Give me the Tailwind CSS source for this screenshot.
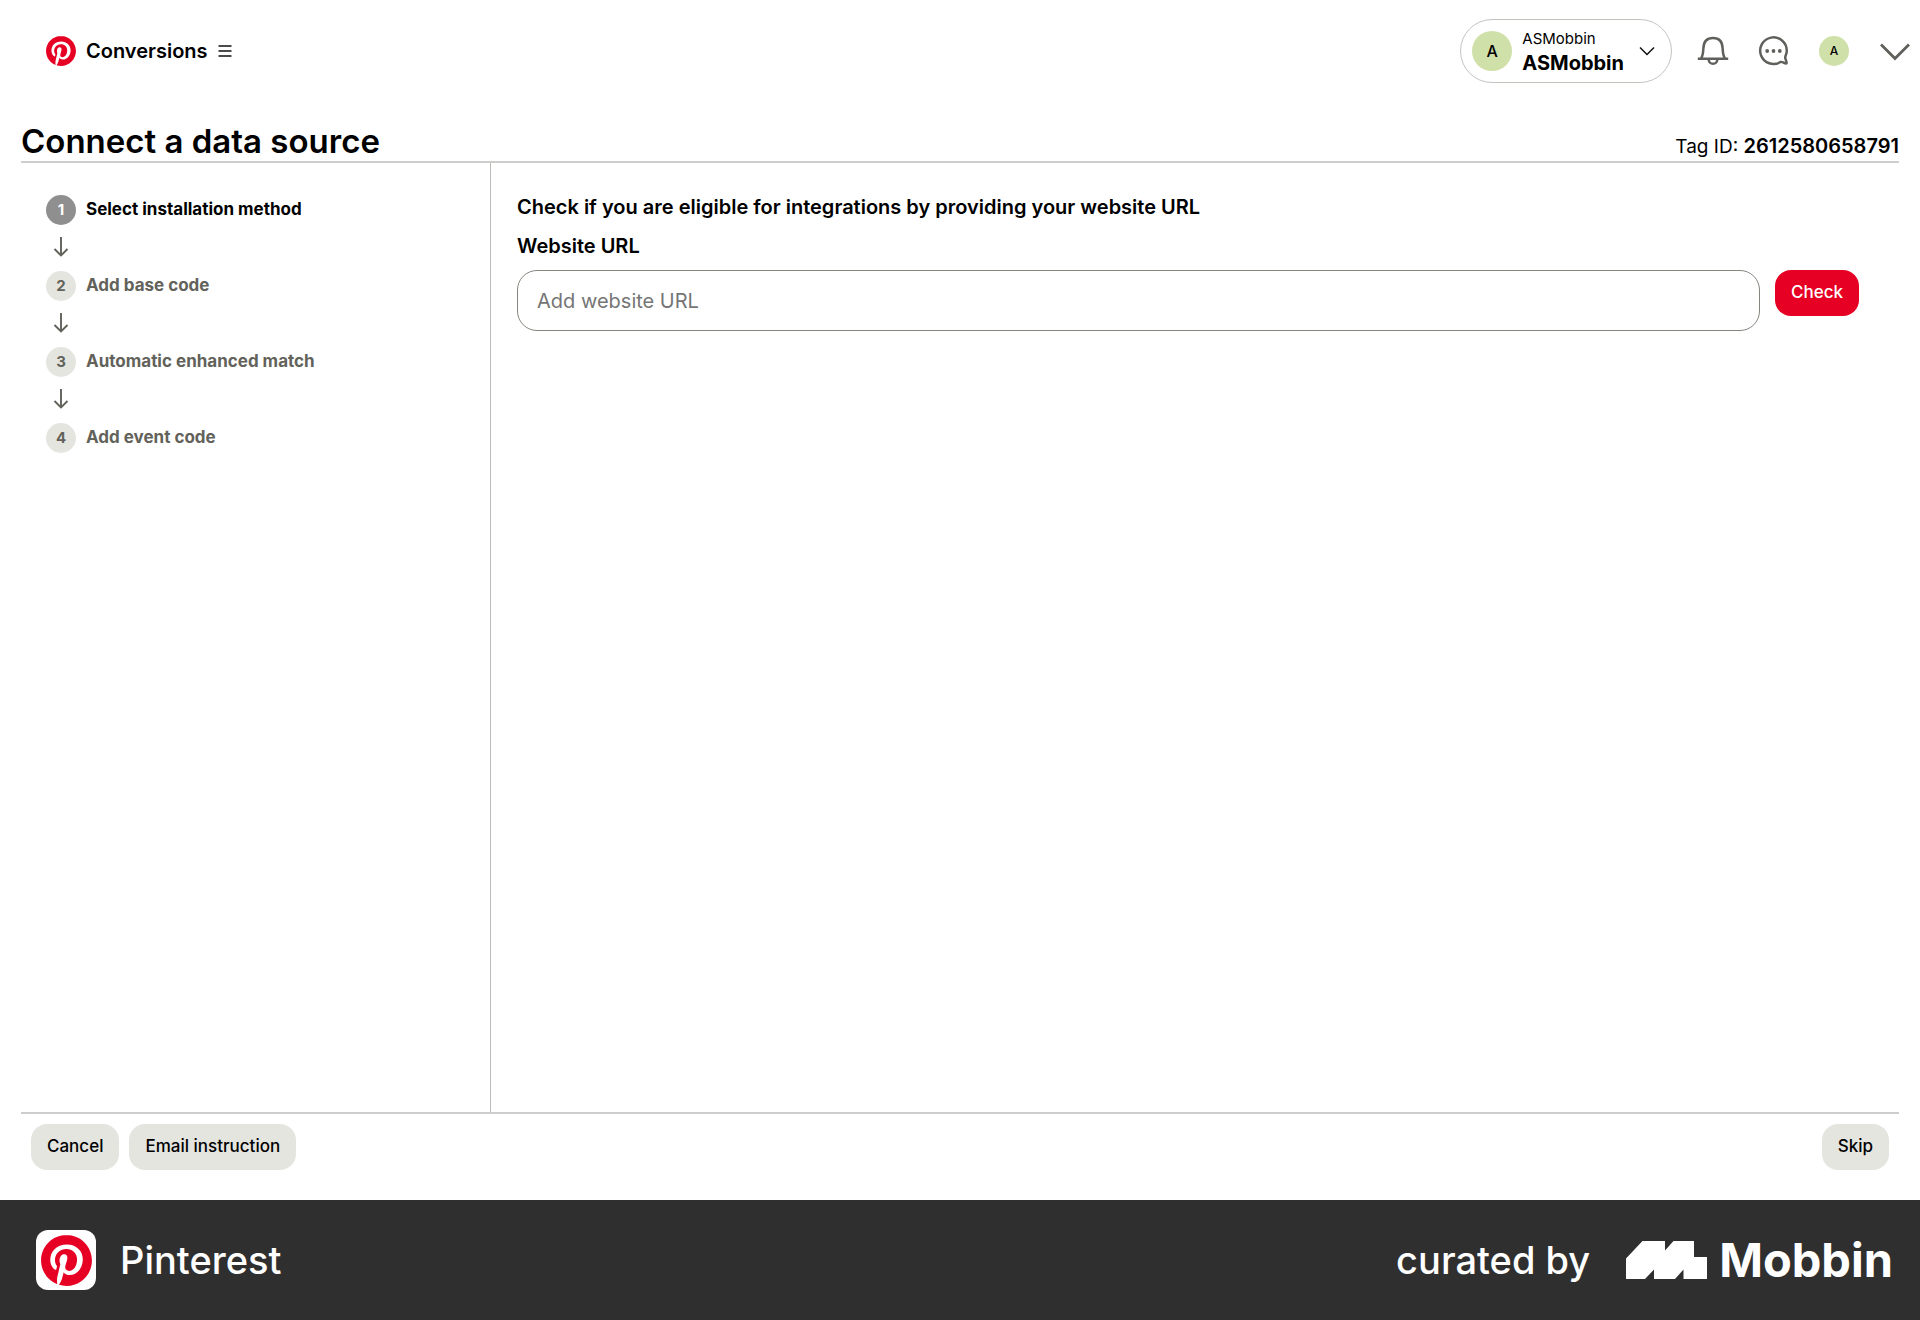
<!DOCTYPE html>
<html lang="en">
<head>
<meta charset="utf-8">
<meta name="viewport" content="width=device-width, initial-scale=1">
<title>Connect a data source</title>
<script src="https://cdn.jsdelivr.net/npm/@tailwindcss/browser@4"></script>
</head>
<body class="flex min-h-screen flex-col bg-white font-['Inter',sans-serif] text-black">
<svg class="hidden" aria-hidden="true">
  <symbol id="pin" viewBox="0 0 24 24"><circle cx="12" cy="12" r="11.5" fill="#fff"/><path fill="#e60023" d="M12.017 0C5.396 0 .029 5.367.029 11.987c0 5.079 3.158 9.417 7.618 11.162-.105-.949-.199-2.403.041-3.439.219-.937 1.406-5.957 1.406-5.957s-.359-.72-.359-1.781c0-1.663.967-2.911 2.168-2.911 1.024 0 1.518.769 1.518 1.688 0 1.029-.653 2.567-.992 3.992-.285 1.193.6 2.165 1.775 2.165 2.128 0 3.768-2.245 3.768-5.487 0-2.861-2.063-4.869-5.008-4.869-3.41 0-5.409 2.562-5.409 5.199 0 1.033.394 2.143.889 2.741.099.12.112.225.085.345-.09.375-.293 1.199-.334 1.363-.053.225-.172.271-.401.165-1.495-.69-2.433-2.878-2.433-4.646 0-3.776 2.748-7.252 7.92-7.252 4.158 0 7.392 2.967 7.392 6.923 0 4.135-2.607 7.462-6.233 7.462-1.214 0-2.354-.629-2.758-1.379l-.749 2.848c-.269 1.045-1.004 2.352-1.498 3.146 1.123.345 2.306.535 3.55.535 6.607 0 11.985-5.365 11.985-11.987C23.97 5.39 18.592.026 11.985.026L12.017 0z"/></symbol>
  <symbol id="arrow" viewBox="0 0 16 20"><path d="M8 0V18.5M1.5 12 8 18.500 14.500 12" fill="none" stroke="#62625b" stroke-width="1.9"/></symbol>
</svg>

<header class="flex h-[102px] items-center justify-between pr-2 pl-[46px]">
  <div class="flex items-center">
    <a href="#" aria-label="Pinterest home"><svg class="size-[30px]"><use href="#pin"/></svg></a>
    <span class="ml-[10px] text-xl font-semibold">Conversions</span>
    <button type="button" aria-label="Menu" class="ml-[10px]">
      <svg class="h-4 w-[14px]" viewBox="0 0 14 16"><path d="M0.500 3H13.500M0.500 8H13.500M0.500 13H13.500" stroke="#111" stroke-width="1.5"/></svg>
    </button>
  </div>
  <div class="flex items-center gap-[25px]">
    <button type="button" class="flex h-[64px] items-center rounded-full border border-[#c4c4bf] pr-4 pl-[11px] text-left">
      <span class="flex size-10 items-center justify-center rounded-full bg-[#cfe0a8] text-base font-medium">A</span>
      <span class="ml-[10px] flex flex-col">
        <span class="text-[15px] leading-6">ASMobbin</span>
        <span class="text-xl leading-6 font-bold">ASMobbin</span>
      </span>
      <svg class="ml-[15px] h-[10px] w-4" viewBox="0 0 16 10"><path d="M1 1.500 8 8.500 15 1.500" fill="none" stroke="#111" stroke-width="1.5"/></svg>
    </button>
    <div class="flex items-center gap-[29px]">
      <button type="button" aria-label="Notifications">
        <svg class="size-8" viewBox="0 0 32 32" fill="none" stroke="#5f5f5b" stroke-width="2.500"><path d="M.8 23.700H31.200M4 23.500C6 21 6.200 17.500 6.400 13 6.700 6.500 10.300 3 16 3S25.300 6.500 25.600 13C25.800 17.500 26 21 28 23.500M11.800 24V25a4.200 3.800 0 0 0 8.400 0V24"/></svg>
      </button>
      <button type="button" aria-label="Messages">
        <svg class="size-8" viewBox="0 0 32 32"><path d="M22.500 27A13.300 13.300 0 1 1 28.800 15.700C28.800 19 27.200 20.500 27.200 22.500 27.200 24.500 29 26.500 28.500 28.400 26.500 29 24.500 26.200 22.500 27Z" fill="none" stroke="#5f5f5b" stroke-width="2.500" stroke-linejoin="round"/><g fill="#5f5f5b"><circle cx="9.200" cy="16" r="1.900"/><circle cx="15.500" cy="16" r="1.900"/><circle cx="21.800" cy="16" r="1.900"/></g></svg>
      </button>
      <button type="button" aria-label="Profile" class="flex size-[30px] items-center justify-center rounded-full bg-[#cfe0a8] text-xs font-medium">A</button>
      <button type="button" aria-label="More options">
        <svg class="h-5 w-[34px]" viewBox="0 0 34 20"><path d="M3 3.500 17 17.500 31 3.500" fill="none" stroke="#5f5f5b" stroke-width="2.800"/></svg>
      </button>
    </div>
  </div>
</header>

<main class="mx-[21px] flex flex-1 flex-col">
  <div class="flex h-[61px] items-end justify-between border-b-2 border-[#cdcdcb]">
    <h1 class="text-[33px] leading-10 font-semibold">Connect a data source</h1>
    <p class="text-[19px] leading-7">Tag ID: <strong class="text-xl leading-7 font-semibold">2612580658791</strong></p>
  </div>
  <div class="flex flex-1">
    <ol class="flex w-[470px] flex-col border-r border-[#bcbcb8] pt-8 pl-[25px] text-[17px] font-bold text-[#62625b]">
      <li class="flex flex-col gap-3" aria-current="step">
        <span class="flex items-center gap-[10px] text-black"><span class="flex size-[30px] items-center justify-center rounded-full bg-[#8f8f8f] text-[15px] text-white">1</span>Select installation method</span>
        <svg class="mx-[7px] mb-[14px] h-5 w-4"><use href="#arrow"/></svg>
      </li>
      <li class="flex flex-col gap-3">
        <span class="flex items-center gap-[10px]"><span class="flex size-[30px] items-center justify-center rounded-full bg-[#e5e5e0] text-[15px]">2</span>Add base code</span>
        <svg class="mx-[7px] mb-[14px] h-5 w-4"><use href="#arrow"/></svg>
      </li>
      <li class="flex flex-col gap-3">
        <span class="flex items-center gap-[10px]"><span class="flex size-[30px] items-center justify-center rounded-full bg-[#e5e5e0] text-[15px]">3</span>Automatic enhanced match</span>
        <svg class="mx-[7px] mb-[14px] h-5 w-4"><use href="#arrow"/></svg>
      </li>
      <li class="flex flex-col gap-3">
        <span class="flex items-center gap-[10px]"><span class="flex size-[30px] items-center justify-center rounded-full bg-[#e5e5e0] text-[15px]">4</span>Add event code</span>
      </li>
    </ol>
    <section class="flex-1 pt-[29px] pr-10 pl-[26px]">
      <h2 class="text-xl leading-[30px] font-semibold">Check if you are eligible for integrations by providing your website URL</h2>
      <form class="mt-[9px]">
        <label for="url" class="block text-xl leading-[30px] font-semibold">Website URL</label>
        <div class="mt-[9px] flex items-start gap-[15px]">
          <input id="url" type="url" placeholder="Add website URL" class="h-[61px] min-w-0 flex-1 rounded-[20px] border border-[#85857f] px-[19px] text-xl placeholder:text-[#757575]">
          <button type="button" class="h-[46px] rounded-2xl bg-[#e60023] px-4 text-[17px] font-medium text-white">Check</button>
        </div>
      </form>
    </section>
  </div>
  <div class="flex h-[88px] items-start justify-between border-t-2 border-[#cdcdcb] px-[10px] pt-[10px] text-[17px] font-medium">
    <div class="flex gap-[10px]">
      <button type="button" class="h-[46px] rounded-2xl bg-[#e5e5e0] px-4">Cancel</button>
      <button type="button" class="h-[46px] rounded-2xl bg-[#e5e5e0] px-4">Email instruction</button>
    </div>
    <button type="button" class="h-[46px] rounded-2xl bg-[#e5e5e0] px-4">Skip</button>
  </div>
</main>

<footer class="flex h-[120px] items-center justify-between bg-[#2f2f2f] pr-[27px] pl-9 text-white">
  <div class="flex items-center gap-6">
    <span class="flex size-[60px] items-center justify-center rounded-xl bg-white"><svg class="size-[51px]"><use href="#pin"/></svg></span>
    <span class="text-[38px] font-medium">Pinterest</span>
  </div>
  <div class="flex items-center">
    <span class="text-[38px] font-medium">curated by</span>
    <svg class="ml-9 h-[38px] w-[81px]" viewBox="0 0 81 38" aria-hidden="true"><path fill="#fff" d="M0 17.500 16.500 0H39V9.500L47.500 0H68V16H81V38H57.500V28.500L49 38H28V28.500L19 38H0Z"/></svg>
    <span class="ml-3 text-[47px] font-bold">Mobbin</span>
  </div>
</footer>
</body>
</html>
